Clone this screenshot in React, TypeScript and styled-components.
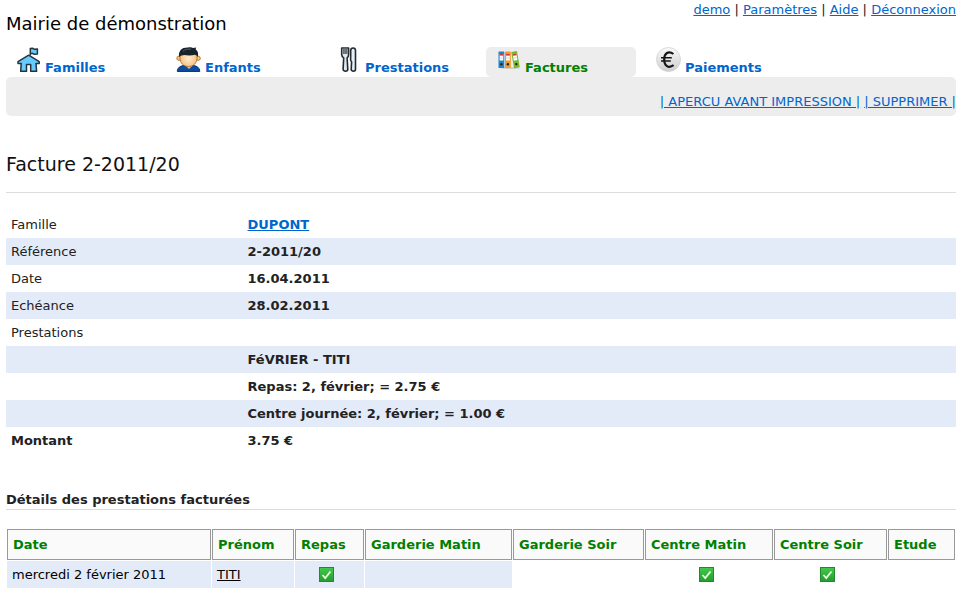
import React from "react";
import styled, { createGlobalStyle } from "styled-components";

const GlobalStyle = createGlobalStyle`
  body {
    margin: 0;
    background: #fff;
    color: #222;
    font-family: "DejaVu Sans", Verdana, sans-serif;
    font-size: 13px;
    line-height: 17px;
  }
`;

const Page = styled.div`
  padding: 0 4px 20px 6px;
`;

const Header = styled.header`
  display: flex;
  justify-content: space-between;
  align-items: flex-start;
  height: 47px;
`;

const SiteName = styled.div`
  padding-top: 12px;
  color: #000;
  font-size: 18px;
  line-height: 24px;
`;

const UserLinks = styled.nav`
  padding-top: 1px;
`;

const Link = styled.a`
  color: #0066cc;
  text-decoration: underline;
`;

const Tabs = styled.nav`
  display: flex;
  gap: 10px;
`;

const Tab = styled.a<{ $active?: boolean }>`
  display: flex;
  align-items: baseline;
  gap: 4px;
  box-sizing: border-box;
  width: 150px;
  height: 30px;
  padding-left: 10px;
  border-radius: 5px;
  background: ${(p) => (p.$active ? "#ededed" : "transparent")};
  color: ${(p) => (p.$active ? "#008000" : "#0066cc")};
  font-weight: bold;
  text-decoration: none;
`;

const TabIcon = styled.svg`
  width: 25px;
  height: 25px;
  flex: none;
`;

const ActionBar = styled.div`
  display: flex;
  justify-content: flex-end;
  gap: 4px;
  padding: 16px 0 6px;
  border-radius: 5px;
  background: #ededed;
`;

const PageTitle = styled.h1`
  margin: 36px 0 18px;
  padding-bottom: 16px;
  border-bottom: 1px solid #ddd;
  color: #111;
  font-size: 19px;
  font-weight: normal;
  line-height: 24px;
`;

const Summary = styled.table`
  width: 100%;
  border-collapse: collapse;

  tr:nth-child(even) {
    background: #e3ebf9;
  }
`;

const Label = styled.th<{ $strong?: boolean }>`
  box-sizing: border-box;
  width: 25%;
  padding: 5px;
  font-weight: ${(p) => (p.$strong ? "bold" : "normal")};
  text-align: left;
`;

const Value = styled.td`
  padding: 5px 4px;
  font-weight: bold;
`;

const SectionTitle = styled.h2`
  margin: 37px 0 18px;
  padding-bottom: 1px;
  border-bottom: 1px solid #ddd;
  font-size: 13px;
  line-height: 17px;
`;

const Details = styled.table`
  width: 100%;
  table-layout: fixed;
  border-collapse: separate;
  border-spacing: 1px;
  color: #000;
`;

const Column = styled.col<{ $width: number }>`
  width: ${(p) => p.$width}px;
`;

const HeadCell = styled.th`
  padding: 6px 5px;
  border: 1px solid #999;
  background: #fafafa;
  color: #008000;
  text-align: left;
  white-space: nowrap;
`;

const Cell = styled.td<{ $shaded?: boolean; $center?: boolean }>`
  height: 17px;
  padding: 5px;
  background: ${(p) => (p.$shaded ? "#e3ebf9" : "transparent")};
  text-align: ${(p) => (p.$center ? "center" : "left")};
`;

const NameLink = styled.a`
  color: #000;
  text-decoration: underline;
`;

const CheckIcon = styled.svg`
  display: inline-block;
  width: 15px;
  height: 15px;
  margin: 1px 6px 0 0;
  vertical-align: top;
`;

const HouseIcon = () => (
  <TabIcon viewBox="0 0 25 25" aria-hidden="true">
    <g fill="#66ccff" stroke="#26343b" strokeWidth="1.5" strokeLinejoin="round">
      <path d="M14.3 8.5V1.6l2.2-.4 2 1.1 2.9-.4v5l-3 .4-2-1-2.1.5" />
      <path d="M12.7 8.2 2 14.6v1.8h3.2l-.5 7.9h5.8v-6.8h4.2v6.8h5.9l-.6-7.9h3.2v-1.8z" />
    </g>
  </TabIcon>
);

const ChildIcon = () => (
  <TabIcon viewBox="0 0 25 25" aria-hidden="true">
    <defs>
      <radialGradient id="skin" cx="50%" cy="55%" r="55%">
        <stop offset="0" stopColor="#ffedcf" />
        <stop offset="1" stopColor="#f6bd78" />
      </radialGradient>
    </defs>
    <path d="M1.3 24.4c.3-3.8 2.6-5.3 7-6.1h8.5c4.400.8 6.600 2.300 7 6.100z" fill="#0b4da2" stroke="#082d63" />
    <path d="M9 18.300 13 22l4-3.700z" fill="#f1bd82" />
    <g stroke="#a76625" strokeWidth=".8">
      <circle cx="2.900" cy="11.300" r="2.100" fill="#f9c580" />
      <circle cx="22.200" cy="11.300" r="2.100" fill="#f9c580" />
      <path d="M4 8c0-5 3.500-6.500 8.500-6.500S21 4 21 8v3c0 5-3.500 8.500-8.500 8.500S4 16 4 11z" fill="url(#skin)" />
    </g>
    <path d="M3 9.800C2.400 3.600 6 .4 12 .6c2-.6 4-.3 5 .4l3.200-.4-.6 1.600c2.300 1.600 3 4.200 2.200 7.600-.8-1-1.700-1.600-2.800-2-3.600.9-7.600.8-10.700.2C6.300 8.200 4.500 8.800 3 9.800z" fill="#18222a" />
    <path d="M7 4.200c1.800-2 5-2.400 8-2" fill="none" stroke="#52616c" />
  </TabIcon>
);

const CutleryIcon = () => (
  <TabIcon viewBox="0 0 25 25" aria-hidden="true">
    <g stroke="#252a2e" strokeWidth="1.600" strokeLinejoin="round">
      <path d="M5.700 1h6.900v6.500c0 1.800-.6 2.800-1.500 3.400l.7 11.400c0 2.500-4.700 2.500-4.700 0l.6-11.400c-1.300-.7-2-1.700-2-3.400z" fill="#dceaf3" />
      <path d="M14.700 9V3.500c0-3.400 4.800-3.400 4.800 0v18.800c0 2.500-4.300 2.500-4.300 0l.4-7.300-1-2z" fill="#e4f0f7" />
    </g>
    <path d="M6.500 1.500h5.300v5.500H6.500z" fill="#8d969b" />
    <path d="M7.700 1v6M9.200 1v6M10.700 1v6" stroke="#4a5257" strokeWidth=".7" />
  </TabIcon>
);

const Binder = ({ fill, transform }: { fill: string; transform: string }) => (
  <g transform={transform}>
    <rect width="5.800" height="16.500" rx=".6" fill={fill} />
    <rect x="1.100" y="2.500" width="3.700" height="6.500" fill="#fff" />
    <rect x="1.100" y="2.500" width="3.700" height="1.600" fill="#d6322c" />
    <path d="M1.500 6.500h2.900" stroke="#bbb" strokeWidth=".6" />
    <circle cx="2.900" cy="12.800" r="1.200" fill="#222" />
  </g>
);

const BindersIcon = () => (
  <TabIcon viewBox="0 0 25 25" aria-hidden="true">
    <ellipse cx="14" cy="21" rx="10" ry="1" fill="#cfcfcf" />
    <Binder fill="#1c86cc" transform="translate(2.500 4.500)" />
    <Binder fill="#f39a22" transform="translate(9 4.500)" />
    <Binder fill="#77b82e" transform="translate(15.200 5) rotate(-10)" />
  </TabIcon>
);

const EuroIcon = () => (
  <TabIcon viewBox="0 0 25 25" aria-hidden="true">
    <defs>
      <linearGradient id="coin" x1="0" y1="0" x2="0" y2="1">
        <stop offset="0" stopColor="#fafafa" />
        <stop offset="1" stopColor="#cecece" />
      </linearGradient>
    </defs>
    <circle cx="12.500" cy="12.500" r="12" fill="url(#coin)" stroke="#d0d0d0" strokeWidth=".8" />
    <path d="M17.400 7C12.500 3.200 8.200 6.200 8.200 12.500s4.300 9.300 9.400 5.700" fill="none" stroke="#161616" strokeWidth="2.200" />
    <path d="M5 10.800h10.800M5 14h9.800" stroke="#161616" strokeWidth="1.400" />
  </TabIcon>
);

const Check = () => (
  <CheckIcon viewBox="0 0 15 15" role="img" aria-label="Oui">
    <defs>
      <linearGradient id="tick" x1="0" y1="0" x2="0" y2="1">
        <stop offset="0" stopColor="#45c94c" />
        <stop offset="1" stopColor="#239b32" />
      </linearGradient>
    </defs>
    <rect x=".5" y=".5" width="14" height="14" fill="url(#tick)" stroke="#218a2d" />
    <path d="m3.500 8 2.700 3 5.300-6.500" fill="none" stroke="#e4ffd6" strokeWidth="1.800" />
  </CheckIcon>
);

const tabs = [
  { label: "Familles", Icon: HouseIcon },
  { label: "Enfants", Icon: ChildIcon },
  { label: "Prestations", Icon: CutleryIcon },
  { label: "Factures", Icon: BindersIcon, active: true },
  { label: "Paiements", Icon: EuroIcon },
];

const summary: { label: string; value: React.ReactNode; strong?: boolean }[] = [
  { label: "Famille", value: <Link href="#dupont">DUPONT</Link> },
  { label: "Référence", value: "2-2011/20" },
  { label: "Date", value: "16.04.2011" },
  { label: "Echéance", value: "28.02.2011" },
  { label: "Prestations", value: "" },
  { label: "", value: "FéVRIER - TITI" },
  { label: "", value: "Repas: 2, février; = 2.75 €" },
  { label: "", value: "Centre journée: 2, février; = 1.00 €" },
  { label: "Montant", value: "3.75 €", strong: true },
];

const columns = [
  { label: "Date", width: 204 },
  { label: "Prénom", width: 82 },
  { label: "Repas", width: 69 },
  { label: "Garderie Matin", width: 147 },
  { label: "Garderie Soir", width: 131 },
  { label: "Centre Matin", width: 128 },
  { label: "Centre Soir", width: 113 },
  { label: "Etude", width: 67 },
];

export default function App() {
  return (
    <>
      <GlobalStyle />
      <Page>
        <Header>
          <SiteName>Mairie de démonstration</SiteName>
          <UserLinks>
            <Link href="#demo">demo</Link> | <Link href="#parametres">Paramètres</Link> |{" "}
            <Link href="#aide">Aide</Link> | <Link href="#deconnexion">Déconnexion</Link>
          </UserLinks>
        </Header>
        <Tabs>
          {tabs.map(({ label, Icon, active }) => (
            <Tab key={label} href={`#${label.toLowerCase()}`} $active={active}>
              <Icon />
              {label}
            </Tab>
          ))}
        </Tabs>
        <ActionBar>
          <Link href="#apercu">| APERCU AVANT IMPRESSION |</Link>
          <Link href="#supprimer">| SUPPRIMER |</Link>
        </ActionBar>
        <main>
          <PageTitle>Facture 2-2011/20</PageTitle>
          <Summary>
            <tbody>
              {summary.map((row, i) => (
                <tr key={i}>
                  <Label scope="row" $strong={row.strong}>{row.label}</Label>
                  <Value>{row.value}</Value>
                </tr>
              ))}
            </tbody>
          </Summary>
          <SectionTitle>Détails des prestations facturées</SectionTitle>
          <Details>
            <colgroup>
              {columns.map((c) => (
                <Column key={c.label} $width={c.width} />
              ))}
            </colgroup>
            <thead>
              <tr>
                {columns.map((c) => (
                  <HeadCell key={c.label} scope="col">{c.label}</HeadCell>
                ))}
              </tr>
            </thead>
            <tbody>
              <tr>
                <Cell $shaded>mercredi 2 février 2011</Cell>
                <Cell $shaded><NameLink href="#titi">TITI</NameLink></Cell>
                <Cell $shaded $center><Check /></Cell>
                <Cell $shaded />
                <Cell />
                <Cell $center><Check /></Cell>
                <Cell $center><Check /></Cell>
                <Cell />
              </tr>
            </tbody>
          </Details>
        </main>
      </Page>
    </>
  );
}
